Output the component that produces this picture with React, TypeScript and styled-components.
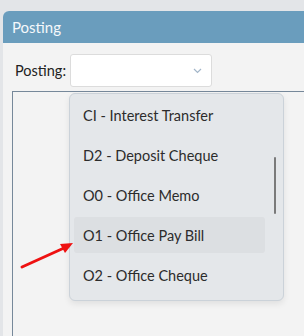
import styled, { createGlobalStyle } from 'styled-components';

const GlobalStyle = createGlobalStyle`
  html, body {
    margin: 0;
    padding: 0;
    background: #e3e5e8;
  }
  body {
    font-family: Lato, "Noto Sans", Arial, sans-serif;
    color: #2e2e2e;
  }
`;

const Screen = styled.div`
  position: relative;
  width: 304px;
  height: 336px;
  overflow: hidden;
  padding: 11px 0 0 3px;
  box-sizing: border-box;
  background: #e3e5e8;
`;

const Panel = styled.div`
  height: 100%;
  background: #f3f3f3;
  border-top-left-radius: 6px;
  overflow: hidden;
  display: flex;
  flex-direction: column;
`;

const PanelHeader = styled.div`
  height: 32px;
  background: #6a9dbd;
  color: #f5f8fb;
  font-size: 15px;
  display: flex;
  align-items: center;
  padding-left: 9px;
`;

const PanelBody = styled.div`
  flex: 1;
  padding: 11px 0 0 9px;
  display: flex;
  flex-direction: column;
`;

const FieldRow = styled.div`
  display: flex;
  align-items: center;
  padding-left: 3px;
`;

const Label = styled.span`
  width: 55px;
  font-size: 14.5px;
  color: #222;
`;

const SelectBox = styled.div`
  width: 142px;
  height: 33px;
  box-sizing: border-box;
  background: #fff;
  border: 1px solid #dcdcdc;
  border-radius: 3px;
  display: flex;
  align-items: center;
  justify-content: flex-end;
  padding-right: 9px;
`;

const GroupBox = styled.div`
  flex: 1;
  margin-top: 4px;
  border-top: 1px solid #76889a;
  border-left: 1px solid #76889a;
`;

const Dropdown = styled.div`
  position: absolute;
  left: 69px;
  top: 93px;
  width: 215px;
  height: 208px;
  box-sizing: border-box;
  background: #e4e7ea;
  border: 1px solid #cbd2d9;
  border-radius: 6px;
  box-shadow: 0 3px 6px rgba(0, 0, 0, 0.08);
  padding: 3px 18px 0 4px;
  display: flex;
  flex-direction: column;
  gap: 4px;
`;

const Option = styled.div<{ $active?: boolean }>`
  height: 36px;
  display: flex;
  align-items: center;
  padding-left: 9px;
  border-radius: 3px;
  font-size: 14.5px;
  color: #2c2c2c;
  background: ${p => (p.$active ? '#dcdfe2' : 'transparent')};
`;

const ScrollThumb = styled.div`
  position: absolute;
  right: 7px;
  top: 63px;
  width: 2px;
  height: 57px;
  background: #7a7a7a;
  border-radius: 1px;
`;

const Annotation = styled.svg`
  position: absolute;
  left: 0;
  top: 0;
  pointer-events: none;
`;

const options = [
  'CI - Interest Transfer',
  'D2 - Deposit Cheque',
  'O0 - Office Memo',
  'O1 - Office Pay Bill',
  'O2 - Office Cheque',
];

export default function App() {
  return (
    <>
      <GlobalStyle />
      <Screen>
        <Panel>
          <PanelHeader>Posting</PanelHeader>
          <PanelBody>
            <FieldRow>
              <Label>Posting:</Label>
              <SelectBox>
                <svg width="9" height="6" viewBox="0 0 9 6">
                  <path d="M1 1 L4.5 4.5 L8 1" fill="none" stroke="#a3b6c9" strokeWidth="1.2" />
                </svg>
              </SelectBox>
            </FieldRow>
            <GroupBox />
          </PanelBody>
        </Panel>

        <Dropdown>
          {options.map(o => (
            <Option key={o} $active={o.startsWith('O1')}>
              {o}
            </Option>
          ))}
          <ScrollThumb />
        </Dropdown>

        <Annotation width="304" height="336" viewBox="0 0 304 336">
          <line x1="22" y1="267" x2="64" y2="248" stroke="#ee1111" strokeWidth="3" strokeLinecap="round" />
          <polygon points="73,243 60,244 65,253" fill="#ee1111" />
        </Annotation>
      </Screen>
    </>
  );
}
